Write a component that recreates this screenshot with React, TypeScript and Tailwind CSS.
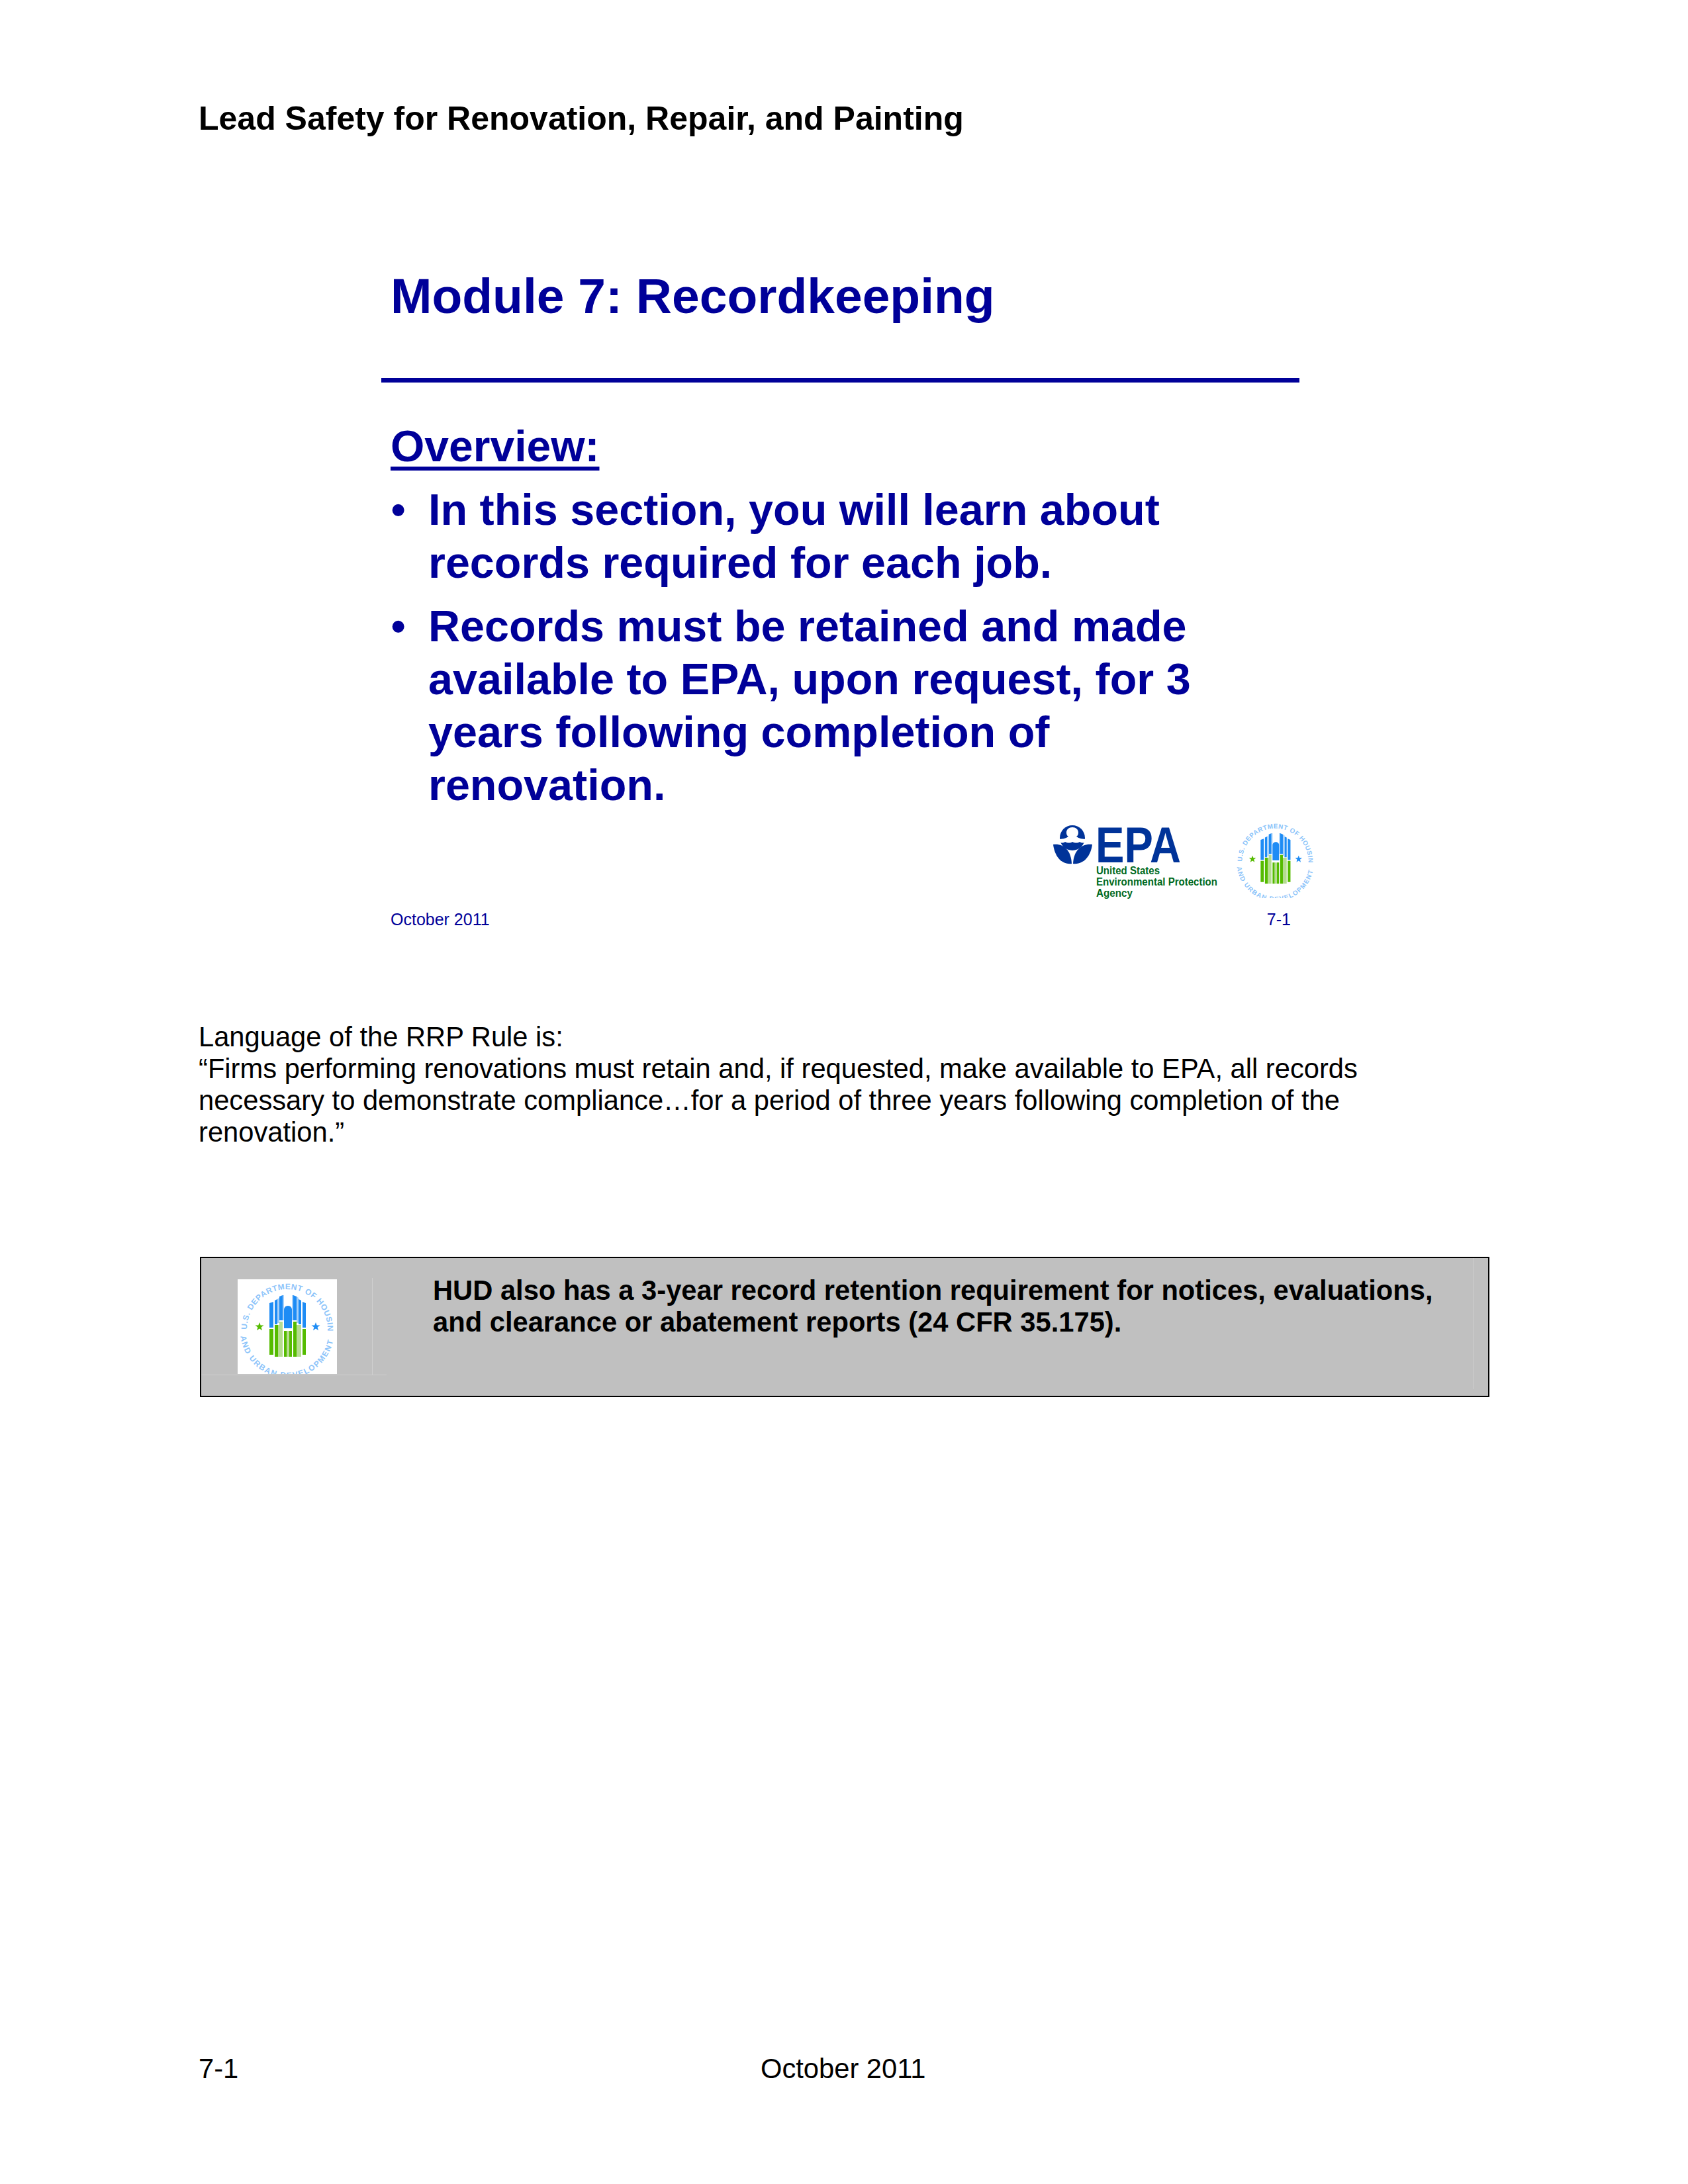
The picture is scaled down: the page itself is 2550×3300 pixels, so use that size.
const FONT = "font-['Liberation_Sans',Arial,sans-serif]";

function EpaLogo() {
  return (
    <svg viewBox="0 0 249 115" className="w-[249px] h-[115px] mt-[8px]">
      {/* flower mark */}
      <circle cx="29" cy="19" r="19" fill="#003399" />
      <path d="M8 21c5 0 11-1 15-4-2-1-3-3-3-6 0-5 4-8 9-8s9 3 9 8c0 3-1 5-3 6 4 3 10 4 15 4v4c-4 2-7 2-10 0-3 2-7 2-11 0-3 2-7 2-11 0-3 2-6 2-10 0z" fill="#ffffff" />
      <path d="M0 29C14 27 27 36 28 58 12 60 2 46 0 29z" fill="#003399" />
      <path d="M59 29C45 27 31 36 30 58 46 60 57 46 59 29z" fill="#003399" />
      <text x="64" y="56" className="font-['Liberation_Sans',Arial,sans-serif]" fontWeight="700" fontSize="76" fill="#003399" textLength="129" lengthAdjust="spacingAndGlyphs">EPA</text>
      <g className="font-['Liberation_Sans',Arial,sans-serif]" fontWeight="700" fontSize="16" fill="#006a1e">
        <text x="65" y="74" textLength="96" lengthAdjust="spacingAndGlyphs">United States</text>
        <text x="65" y="91" textLength="183" lengthAdjust="spacingAndGlyphs">Environmental Protection</text>
        <text x="65" y="108" textLength="55" lengthAdjust="spacingAndGlyphs">Agency</text>
      </g>
    </svg>
  );
}

function HudSeal({ className, id }: { className: string; id: string }) {
  return (
    <svg viewBox="0 0 150 143" className={className}>
      <defs>
        <path id={`${id}Top`} d="M14 76A61 61 0 1 1 136 76" fill="none" />
        <path id={`${id}Bottom`} d="M4 78A71 71 0 0 0 146 78" fill="none" />
      </defs>
      <g className="font-['Liberation_Sans',Arial,sans-serif]" fontWeight="700" fill="#8cc4fa">
        <text fontSize="12" letterSpacing="0.6">
          <textPath href={`#${id}Top`}>U.S. DEPARTMENT OF HOUSING</textPath>
        </text>
        <text fontSize="12" letterSpacing="1.6">
          <textPath href={`#${id}Bottom`} startOffset="8">AND URBAN DEVELOPMENT</textPath>
        </text>
      </g>
      {/* blue towers */}
      <path d="M48 36l6-2v39h-6zM56 32l4-2v38h-4zM63 26l5-2v38h-5zM84 24l5 2v36h-5zM92 30l4 2v36h-4zM98 34l5 2v37h-5z" fill="#1e8cf5" />
      <path d="M60 30l3-2v38h-3zM68 24l2 0v38h-2zM82 24h2v38h-2zM89 26l3 2v38h-3z" fill="#a5d0fa" />
      <path d="M70 74V46c0-3 2-6 6-6s6 3 6 6v28z" fill="#1e8cf5" />
      {/* green towers */}
      <path d="M48 75h6v39h-6zM56 69h5v48h-5zM70 78h4v39h-4zM78 78h4v39h-4zM84 64h5v53h-5zM98 75h5v39h-5z" fill="#55bb00" />
      <path d="M61 69h2v48h-2zM63 64h5v53h-5zM74 78h4v39h-4zM89 69h3v48h-3zM92 69h4v48h-4z" fill="#b5dc90" />
      <path d="M33 65l1.700 4.500h4.800l-3.900 3 1.400 4.800-4-2.800-4 2.800 1.400-4.800-3.900-3h4.800z" fill="#55bb00" />
      <path d="M118 65l1.700 4.500h4.800l-3.900 3 1.400 4.800-4-2.800-4 2.800 1.400-4.800-3.900-3h4.800z" fill="#1e8cf5" />
    </svg>
  );
}

export default function App() {
  return (
    <div className={`${FONT} w-[2550px] h-[3300px] bg-white text-black flex flex-col pl-[300px] pt-[150px]`}>
      <div className="text-[50px] leading-[58px] font-bold h-[58px]">Lead Safety for Renovation, Repair, and Painting</div>

      {/* slide */}
      <div className="mt-[194px] w-[1700px] pl-[290px] text-[#000099] flex flex-col">
        <div className="text-[75px] leading-[90px] font-bold">Module 7: Recordkeeping</div>
        <div className="h-[7px] w-[1387px] -ml-[14px] mt-[79px] bg-[#000099]" />
        <div className="text-[66px] leading-[80px] font-bold mt-[56px] underline underline-offset-[8px] decoration-[6px]">Overview:</div>
        <ul className="text-[66.500px] leading-[80px] font-bold w-[1300px] flex flex-col gap-[16px] mt-[16px]">
          <li className="flex">
            <span className="w-[57px] shrink-0 font-normal">•</span>
            <span>In this section, you will learn about<br />records required for each job.</span>
          </li>
          <li className="flex">
            <span className="w-[57px] shrink-0 font-normal">•</span>
            <span>Records must be retained and made<br />available to EPA, upon request, for 3<br />years following completion of<br />renovation.</span>
          </li>
        </ul>
        <div className="flex justify-end items-start w-[1398px] mt-[13px] gap-[25px]">
          <EpaLogo />
          <HudSeal id="slideSeal" className="w-[123px] h-[118px]" />
        </div>
        <div className="flex justify-between w-[1360px] text-[25px] leading-[30px] mt-[12px]">
          <span>October 2011</span>
          <span>7-1</span>
        </div>
      </div>

      {/* rule text */}
      <div className="mt-[139px] text-[41.700px] leading-[48px] w-[1900px]">
        <p>Language of the RRP Rule is:</p>
        <p>“Firms performing renovations must retain and, if requested, make available to EPA, all records necessary to demonstrate compliance…for a period of three years following completion of the renovation.”</p>
      </div>

      {/* HUD callout */}
      <div className="relative mt-[164px] ml-[2px] w-[1948px] h-[212px] bg-[#c0c0c0] border-2 border-black flex">
        <div className="absolute left-0 top-[176px] w-[280px] h-px bg-[#cfcfcf]" />
        <div className="absolute left-[258px] top-[30px] w-px h-[146px] bg-[#cfcfcf]" />
        <div className="absolute right-[21px] top-0 w-px h-[198px] bg-[#cfcfcf]" />
        <div className="w-[350px] shrink-0 pl-[55px] pt-[32px]">
          <div className="w-[150px] h-[143px] bg-white">
            <HudSeal id="calloutSeal" className="w-[150px] h-[143px]" />
          </div>
        </div>
        <div className="text-[41.700px] leading-[48px] font-bold pt-[25px] w-[1530px]">
          HUD also has a 3-year record retention requirement for notices, evaluations, and clearance or abatement reports (24 CFR 35.175).
        </div>
      </div>

      <div className="flex-1" />
      <div className="flex text-[41.700px] leading-[52px] mb-[148px]">
        <span className="w-[849px]">7-1</span>
        <span>October 2011</span>
      </div>
    </div>
  );
}
